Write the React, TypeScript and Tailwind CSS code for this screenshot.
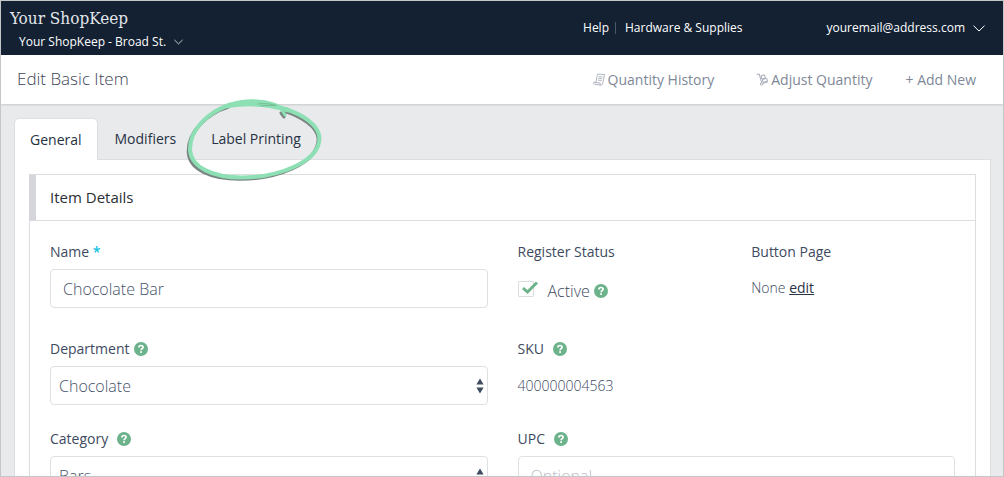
import React, { useState } from 'react';

const HelpIcon: React.FC<{ label: string }> = ({ label }) => (
  <button type="button" aria-label={label} className="shrink-0">
    <svg viewBox="0 0 14 14" className="w-[14px] h-[14px]">
      <circle cx="7" cy="7" r="7" fill="#6cb38c" />
      <path d="M4.900 5.500C4.900 4.200 5.800 3.500 7 3.500s2.100.7 2.100 1.800C9.100 6.700 7.100 6.700 7.100 8.300" fill="none" stroke="#fff" strokeWidth="1.7" />
      <rect x="6.200" y="9.200" width="1.800" height="1.700" fill="#fff" />
    </svg>
  </button>
);

const Chevron: React.FC<{ className: string }> = ({ className }) => (
  <svg viewBox="0 0 12 7" className={className} fill="none" stroke="currentColor" strokeWidth="1">
    <path d="M.5.7 6 6 11.500.7" />
  </svg>
);

const ReceiptIcon = () => (
  <svg viewBox="0 0 13 13" className="w-[13px] h-[13px]" fill="none" stroke="#a6adb8" strokeWidth="0.9">
    <path d="M4.800 1 12 1.800C11 2.500 11.200 3.500 10.900 5L9.700 10.500C9.400 11.800 8.700 12.300 7.600 12.100L1.900 11.300C.9 11.100.5 10.200.8 9.200L2.900 9.500 4.300 2.500Z" />
    <path d="M2.900 9.500 7.200 10.100C7 11.200 7.200 11.800 7.800 12.100M5.800 3.500 9.500 4M5.400 5.300 9.100 5.800M5 7.100 8.700 7.600" />
  </svg>
);

const TrolleyIcon = () => (
  <svg viewBox="0 0 13 13" className="w-[13px] h-[13px]" fill="none" stroke="#a6adb8" strokeWidth="1">
    <path d="M.6 1.300 3.200 1 5.700 9.700M7 10.400 12 8.800" />
    <circle cx="5.600" cy="11" r="1.200" />
    <path d="M5 2.800 8.400 1.800 9.400 5 6 6ZM6.300 6.600 10.700 5.300 11.500 8 7.100 9.300Z" />
  </svg>
);

const ScribbleCircle = () => (
  <svg
    viewBox="0 0 140 90"
    className="absolute -left-[10px] -top-[23px] w-[140px] h-[90px] pointer-events-none"
    fill="none"
    strokeLinecap="round"
    strokeLinejoin="round"
  >
    <g stroke="#7b8582" transform="translate(-1 1)">
      <path strokeWidth="3.600" d="M44 11C24 17 4 35 4.500 56C5 73 26 83 56 83C92 83 134 68 134.500 43C134 31 117 20 100 15" />
      <path strokeWidth="3" d="M97 17 100 21" />
    </g>
    <g stroke="#8ce0b3">
      <path strokeWidth="4" d="M44 10C24 17 4.500 34 5 55C6 72 27 82.500 57 82.500C93 82.500 134.500 67 134.500 43C134 30 117 19 100 14" />
      <path strokeWidth="4" d="M44 10C60 4.500 84 4.500 98 14" />
      <path strokeWidth="4.500" d="M42 11C60 8 82 8.500 103 15" />
      <path strokeWidth="3" d="M97 15 100 20" />
    </g>
    <path stroke="#72b792" strokeWidth="0.900" d="M73 9C80 8 87 9 91 10.500M76 11C82 10 87 10.500 91 10.500" />
  </svg>
);

interface SelectFieldProps {
  id: string;
  label: string;
  value: string;
  labelGap: string;
}

const SelectField: React.FC<SelectFieldProps> = ({ id, label, value, labelGap }) => (
  <div className="col-span-2">
    <div className={`flex items-center h-5 ${labelGap}`}>
      <label htmlFor={id}>{label}</label>
      <HelpIcon label={`About ${label}`} />
    </div>
    <div className="relative mt-[7px]">
      <select
        id={id}
        defaultValue={value}
        className="block w-full h-[39px] px-2 appearance-none bg-white border border-[#dfe0e2] rounded-[4px] text-base font-light text-[#46536a]"
      >
        <option>{value}</option>
      </select>
      <svg viewBox="0 0 8 16" className="absolute right-1 top-3 w-2 h-4 pointer-events-none" fill="#3f4c5f">
        <path d="M4 .5 7.600 6.500H.4ZM4 15.500.4 9.500H7.600Z" />
      </svg>
    </div>
  </div>
);

const tabs = ['General', 'Modifiers', 'Label Printing'];

export default function App() {
  const [activeTab, setActiveTab] = useState('General');
  const [active, setActive] = useState(true);

  return (
    <div className="h-screen flex flex-col overflow-hidden border border-[#c4c6c8] bg-[#e9eaec] font-['Open_Sans','Noto_Sans',sans-serif] text-sm text-[#3d4a5f]">
      <header className="h-[54px] shrink-0 flex items-center bg-[#132133] text-white">
        <div className="flex-1 pt-1 pl-[9px]">
          <h1 className="font-['DejaVu_Serif_Condensed','DejaVu_Serif',serif] text-[17px] leading-6 text-[#e3e6ea]">Your ShopKeep</h1>
          <button type="button" className="flex items-center gap-2 pl-[9px] text-xs leading-6">
            Your ShopKeep - Broad St.
            <Chevron className="w-[9px] h-[6px]" />
          </button>
        </div>
        <nav className="flex items-center text-xs font-medium">
          <a href="#help">Help</a>
          <span className="w-px h-3 ml-[6px] mr-[9px] bg-[#4a586a]" />
          <a href="#hardware">Hardware &amp; Supplies</a>
        </nav>
        <button type="button" className="flex items-center gap-2 ml-[84px] mr-[18px] text-xs font-medium">
          youremail@address.com
          <Chevron className="w-3 h-[7px]" />
        </button>
      </header>

      <div className="relative h-[49px] shrink-0 flex items-center pl-4 pr-[27px] bg-white shadow-[0_1px_2px_rgba(0,0,0,0.15)]">
        <h2 className="flex-1 text-[17px] font-light text-[#3d4557]">Edit Basic Item</h2>
        <div className="flex items-center text-[#7e8897]">
          <button type="button" className="flex items-center gap-[2px]">
            <ReceiptIcon />
            Quantity History
          </button>
          <button type="button" className="flex items-center gap-[2px] ml-[42px]">
            <TrolleyIcon />
            Adjust Quantity
          </button>
          <button type="button" className="ml-[33px]">+ Add New</button>
        </div>
      </div>

      <main className="flex-1 min-h-0 flex flex-col pl-[13px] pr-3 pt-[14px]">
        <div role="tablist" className="relative z-10 flex shrink-0 h-[42px] -mb-px text-[#263142]">
          {tabs.map((tab) => (
            <div key={tab} className="relative flex">
              <button
                type="button"
                role="tab"
                aria-selected={tab === activeTab}
                onClick={() => setActiveTab(tab)}
                className={tab === activeTab ? 'px-[15px] mr-px bg-white rounded-t-[5px] border border-b-0 border-[#dddee1]' : 'px-4 mr-[3px]'}
              >
                {tab}
              </button>
              {tab === 'Label Printing' && <ScribbleCircle />}
            </div>
          ))}
        </div>

        <div role="tabpanel" className="flex-1 min-h-0 overflow-hidden bg-white border border-b-0 border-[#dddee1] px-[14px] pt-[14px]">
          <section className="border border-[#dcdde0]">
            <h3 className="h-[46px] -ml-px pl-[14px] flex items-center border-l-[7px] border-l-[#d5d6dc] border-b border-b-[#dcdde0] text-[15px] text-[#2b2e35]">
              Item Details
            </h3>
            <form className="grid grid-cols-4 gap-x-[30px] gap-y-6 px-5 py-[21px]">
              <div className="col-span-2 pb-[7px]">
                <label htmlFor="name" className="block leading-5">
                  Name <span className="text-[#14bfe0] font-semibold">*</span>
                </label>
                <input
                  id="name"
                  type="text"
                  defaultValue="Chocolate Bar"
                  className="block w-full h-[39px] mt-[7px] px-3 bg-white border border-[#dfe0e2] rounded-[4px] text-base font-light text-[#46536a]"
                />
              </div>
              <div>
                <div className="leading-5">Register Status</div>
                <div className="flex items-center mt-[19px] h-5">
                  <label className="flex items-center">
                    <span className="relative w-[20px] h-5 mr-[10px]">
                      <input
                        type="checkbox"
                        checked={active}
                        onChange={(e) => setActive(e.target.checked)}
                        className="block w-4 h-4 appearance-none bg-white border border-[#dcdde0] rounded-[1px]"
                      />
                      {active && (
                        <svg viewBox="0 0 16 14" className="absolute left-1 top-0 w-4 h-[14px] pointer-events-none" fill="none" stroke="#6cb38c" strokeWidth="3">
                          <path d="M1 7 5.500 11 15 1.500" />
                        </svg>
                      )}
                    </span>
                    <span className="text-base font-light">Active</span>
                  </label>
                  <span className="flex ml-1">
                    <HelpIcon label="About Register Status" />
                  </span>
                </div>
              </div>
              <div>
                <div className="leading-5">Button Page</div>
                <div className="mt-4 leading-5 font-light">
                  None <a href="#edit" className="underline font-normal text-[#2b3547]">edit</a>
                </div>
              </div>

              <SelectField id="department" label="Department" value="Chocolate" labelGap="gap-[5px]" />
              <div className="col-span-2">
                <div className="flex items-center gap-[9px] h-5">
                  SKU
                  <HelpIcon label="About SKU" />
                </div>
                <div className="mt-[17px] leading-5 font-light">400000004563</div>
              </div>

              <SelectField id="category" label="Category" value="Bars" labelGap="gap-[9px]" />
              <div className="col-span-2">
                <div className="flex items-center gap-[9px] h-5">
                  <label htmlFor="upc">UPC</label>
                  <HelpIcon label="About UPC" />
                </div>
                <input
                  id="upc"
                  type="text"
                  placeholder="Optional"
                  className="block w-full h-[39px] mt-[7px] px-3 bg-white border border-[#dfe0e2] rounded-[4px] text-base font-light placeholder:text-[#b9bdc5]"
                />
              </div>
            </form>
          </section>
        </div>
      </main>
    </div>
  );
}
